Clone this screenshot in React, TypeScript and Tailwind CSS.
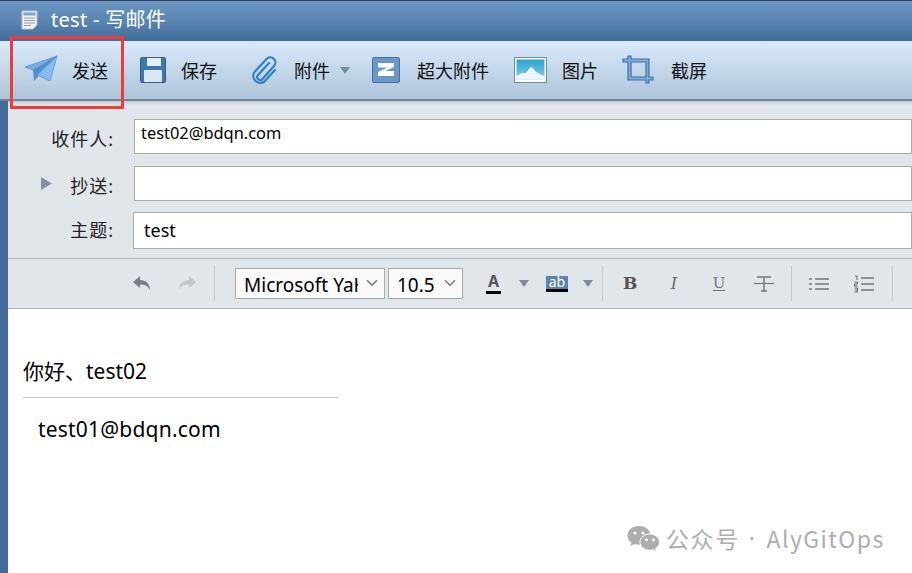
import { ChevronDown } from "lucide-react"

const cjk = "font-['Noto_Sans','Noto_Sans_CJK_SC',sans-serif]"

function SendIcon() {
  return (
    <svg width="36" height="30" viewBox="0 0 36 30" className="ml-[23px]">
      <ellipse cx="17" cy="28" rx="15" ry="0.8" fill="#c3d2e2" />
      <path d="M1 12 L33 1 L9 15 Z" fill="#79aee4" stroke="#5b93cd" strokeWidth="0.8" />
      <path d="M9 15 L33 1 L10 26 Z" fill="#4d8fd0" />
      <path d="M13 20 L33 1 L26 26 Z" fill="#86bbef" stroke="#5b93cd" strokeWidth="0.8" />
    </svg>
  )
}

function SaveIcon() {
  return (
    <svg width="28" height="28" viewBox="0 0 28 28" className="ml-[31px]">
      <path d="M1.5 3 a1.5 1.5 0 0 1 1.5-1.5 H25 a1.5 1.5 0 0 1 1.5 1.5 V25 a1.5 1.5 0 0 1 -1.5 1.5 H3 a1.5 1.5 0 0 1 -1.5-1.5 Z" fill="#3a78ad" stroke="#3d5d7d" />
      <rect x="8" y="2" width="14" height="8" fill="#e4eef6" />
      <rect x="5" y="14" width="18" height="12" rx="1" fill="#dbe8f3" />
    </svg>
  )
}

function ClipIcon() {
  return (
    <svg width="30" height="30" viewBox="0 0 30 30" fill="none" className="ml-[33px]">
      <ellipse cx="14" cy="28.5" rx="11" ry="0.8" fill="#c3d2e2" />
      <path d="M19 8 L8 20 a3 3 0 0 0 4.5 4 L24 11 a5 5 0 0 0 -7.5-7 L4.5 17 a7 7 0 0 0 10 9.5 L25 15" stroke="#2f7fc4" strokeWidth="2.2" strokeLinecap="round" />
    </svg>
  )
}

function ZIcon() {
  return (
    <svg width="28" height="26" viewBox="0 0 28 26" className="ml-[22px]">
      <rect x="0.5" y="0.5" width="27" height="25" rx="1.5" fill="#6a97c9" stroke="#49709b" />
      <path d="M6 6 H22 V10 L13 14 H22 V19 H6 V15 L15.5 10.5 H6 Z" fill="#ffffff" />
    </svg>
  )
}

function PictureIcon() {
  return (
    <svg width="33" height="26" viewBox="0 0 33 26" className="ml-[25px]">
      <defs>
        <linearGradient id="sky" x1="0" y1="0" x2="0" y2="1">
          <stop offset="0" stopColor="#2ba2cf" />
          <stop offset="1" stopColor="#86cfe6" />
        </linearGradient>
      </defs>
      <rect x="0.5" y="0.5" width="32" height="25" fill="#ffffff" stroke="#6d8aa8" />
      <rect x="2.5" y="2.5" width="28" height="20" fill="url(#sky)" />
      <path d="M2.5 22.5 V19 L8 16 L12 16 L15 12 L17 10 L19 11 L22 15 L26 17 L30.5 19 V22.5 Z" fill="#eef5f9" />
    </svg>
  )
}

function CropIcon() {
  return (
    <svg width="32" height="30" viewBox="0 0 32 30" fill="none" className="ml-[24px]">
      <path d="M1 4 H6 V1 H9 V4 H27 V22 H31 V25 H27 V28 H24 V25 H6 V7 H1 Z M9 7 V22 H24 V7 Z" fill="#7aaee6" stroke="#436f9f" strokeWidth="1.2" />
    </svg>
  )
}

function Caret({ className }: { className: string }) {
  return (
    <svg width="10" height="7" viewBox="0 0 10 7" className={className}>
      <path d="M0 0 H10 L5 7 Z" fill="#7d8b9b" />
    </svg>
  )
}

function Separator({ className }: { className: string }) {
  return <div className={`h-[35px] w-px bg-[#c3c8cd] ${className}`} />
}

function Select({ label, labelClass, className }: { label: string; labelClass: string; className: string }) {
  return (
    <div className={`flex h-[31px] items-center justify-between border border-[#a9a9a9] bg-[#fafafa] text-[19px] text-black ${className}`}>
      <span className={`ml-[8px] overflow-hidden whitespace-nowrap pt-[3px] ${labelClass}`}>{label}</span>
      <ChevronDown size={18} strokeWidth={2.2} className="mr-[3px] -translate-y-px shrink-0 text-[#7b7b7b]" />
    </div>
  )
}

export default function App() {
  return (
    <div className={`relative flex h-[573px] w-[912px] overflow-hidden bg-white ${cjk}`}>
      <div className="w-2 shrink-0 bg-[#436b99]" />
      <div className="flex min-w-0 flex-1 flex-col">
        {/* title */}
        <div className="-ml-2 flex h-[41px] items-center border-t border-[#2c4560] bg-gradient-to-b from-[#6c96c1] via-[#5b85b2] to-[#416b99] pb-[2px] pl-[21px] text-[20px] tracking-[0.3px] text-white">
          <svg width="17" height="20" viewBox="0 0 17 20">
            <path d="M1 1 H16 V15 L12 19 H1 Z" fill="#f1f1ee" stroke="#b9c2cb" />
            <rect x="2.5" y="2.5" width="12" height="3" fill="#7aa3d0" />
            <path d="M3 8 H14 M3 10.5 H14 M3 13 H14 M3 15.5 H10" stroke="#8f969e" strokeWidth="0.9" />
          </svg>
          <span className="ml-[13px]">test - 写邮件</span>
        </div>

        {/* main toolbar */}
        <div className="-ml-2 flex h-[60px] shrink-0 items-center border-b-2 border-[#6f8399] bg-gradient-to-b from-[#d9eafa] to-[#afc5db] pl-px text-[18px] text-[#111]">
          <SendIcon />
          <span className="ml-[12px] pt-[3px]">发送</span>
          <SaveIcon />
          <span className="ml-[14px] pt-[3px]">保存</span>
          <ClipIcon />
          <span className="ml-[14px] pt-[3px]">附件</span>
          <Caret className="ml-[10px]" />
          <ZIcon />
          <span className="ml-[17px] pt-[3px]">超大附件</span>
          <PictureIcon />
          <span className="ml-[15px] pt-[3px]">图片</span>
          <CropIcon />
          <span className="ml-[17px] pt-[3px]">截屏</span>
        </div>

        {/* address fields */}
        <div className="h-[158px] shrink-0 border-b border-[#b4b8bc] bg-[#e1e6ea]">
          <div className="h-1 bg-gradient-to-b from-[#c6cacf] to-[#e1e6ea]" />
          <div className="mt-[14px] flex h-[35px] items-center">
            <div className="w-[126px] pr-[20px] pt-[6px] text-right text-[18px] tracking-[1px] text-[#222]">收件人:</div>
            <div className="h-[35px] flex-1 border border-[#ababab] bg-white pl-[6px] text-[16.4px] leading-[26px] text-black">test02@bdqn.com</div>
          </div>
          <div className="mt-[12px] flex h-[35px] items-center">
            <div className="flex w-[126px] items-center justify-between pl-[33px] pr-[20px] pt-[6px] text-[18px] tracking-[1px] text-[#222]">
              <svg width="11" height="13" viewBox="0 0 11 13" className="-translate-y-[3px]">
                <path d="M0 0 L11 6.5 L0 13 Z" fill="#8093a9" />
              </svg>
              <span>抄送:</span>
            </div>
            <div className="h-[35px] flex-1 border border-[#ababab] bg-white" />
          </div>
          <div className="mt-[11px] flex h-[37px] items-center">
            <div className="w-[125px] pr-[19px] text-right text-[18px] tracking-[1px] text-[#222]">主题:</div>
            <div className="h-[37px] flex-1 border border-[#ababab] bg-white pl-[10px] text-[18px] leading-[34px] text-black">test</div>
          </div>
        </div>

        {/* format toolbar */}
        <div className="flex h-[50px] shrink-0 items-center border-b border-[#b4b8bc] bg-[#e1e6ea] text-[#6f6f6f]">
          <svg width="18" height="15" viewBox="0 0 18 15" className="ml-[125px]">
            <path d="M0 6 L7 0 V4 C13 4 17 8 17 14 C15 10 12 8.5 7 8.5 V12 Z" fill="#787f86" />
          </svg>
          <svg width="18" height="15" viewBox="0 0 18 15" className="ml-[27px]">
            <path d="M18 6 L11 0 V4 C5 4 1 8 1 14 C3 10 6 8.5 11 8.5 V12 Z" fill="#c5c9cd" />
          </svg>
          <Separator className="ml-[18px]" />
          <Select label="Microsoft YaHei" labelClass="w-[114px]" className="ml-[20px] w-[150px]" />
          <Select label="10.5" labelClass="w-[44px]" className="ml-[3px] w-[75px]" />
          <div className="ml-[23px] flex w-[15px] flex-col items-center font-bold leading-[15px] text-[#565656]">
            <span className="text-[16px]">A</span>
            <div className="mt-[2px] h-[3px] w-[15px] bg-black" />
          </div>
          <Caret className="ml-[18px]" />
          <div className="ml-[17px] flex w-[22px] flex-col">
            <div className="flex h-[13px] items-center justify-center bg-[#5d84ad] text-[14px] leading-none text-white">ab</div>
            <div className="h-[3px] bg-black" />
          </div>
          <Caret className="ml-[15px]" />
          <Separator className="ml-[9px]" />
          <div className="ml-[20px] w-[14px] text-center font-['DejaVu_Serif',serif] text-[17px] font-bold text-[#555]">B</div>
          <div className="ml-[30px] w-[14px] text-center font-['DejaVu_Serif',serif] text-[16px] italic text-[#666]">I</div>
          <div className="ml-[31px] w-[14px] text-center font-['DejaVu_Serif',serif] text-[15px] text-[#777] underline underline-offset-2">U</div>
          <svg width="20" height="16" viewBox="0 0 20 16" className="ml-[28px]">
            <path d="M3 1 H17 M10 1 V15 M7 15 H13" stroke="#777" strokeWidth="1.5" fill="none" />
            <path d="M0 7.5 H20" stroke="#777" strokeWidth="1.2" />
          </svg>
          <Separator className="ml-[17px]" />
          <svg width="20" height="14" viewBox="0 0 20 14" className="ml-[17px]">
            <path d="M0 2 H3 M0 7 H3 M0 12 H3 M6 2 H20 M6 7 H20 M6 12 H20" stroke="#777" strokeWidth="1.4" />
          </svg>
          <svg width="20" height="18" viewBox="0 0 20 18" className="ml-[25px]">
            <path d="M7 3 H20 M7 9 H20 M7 15 H20" stroke="#777" strokeWidth="1.4" />
            <path d="M1 1 H3 V5 M0.5 7 H3.5 V9 H0.5 V11 H3.5 M0.5 13 H3.5 V17 H0.5 M1 15 H3.5" stroke="#666" strokeWidth="1" fill="none" />
          </svg>
          <Separator className="ml-[18px]" />
        </div>

        {/* message body */}
        <div className="flex-1 bg-white pl-[15px] pt-[47px] text-black">
          <div className="text-[21px] leading-[30px]">你好、test02</div>
          <div className="mt-[11px] h-px w-[315px] bg-[#bfc3d3]" />
          <div className="mt-[17px] pl-[15px] text-[21px] leading-[28px] tracking-[0.2px]">test01@bdqn.com</div>
        </div>
      </div>

      {/* highlight round send button */}
      <div className="absolute left-[10px] top-[36px] h-[73px] w-[114px] border-[3px] border-[#f03b3b]" />

      {/* watermark */}
      <div className="absolute left-[627px] top-[521px] flex items-center font-['Noto_Sans_CJK_SC',sans-serif] text-[23px] tracking-[1.6px] text-[#adadad]">
        <svg width="33" height="27" viewBox="0 0 33 27">
          <path d="M12 1 C5.5 1 0.5 5 0.5 10.5 C0.5 13.5 2 16 4.5 17.7 L3.5 21 L7.5 19 C9 19.5 10.5 19.7 12 19.7 C18.5 19.7 23.5 15.5 23.5 10.5 C23.5 5 18.5 1 12 1 Z" fill="#adadad" />
          <circle cx="8" cy="8" r="1.6" fill="#fff" />
          <circle cx="16" cy="8" r="1.6" fill="#fff" />
          <path d="M23 9 C17.5 9 13 12.7 13 17.3 C13 21.7 17.5 25.3 23 25.3 C24.2 25.3 25.3 25.1 26.3 24.8 L29.5 26.5 L28.7 23.5 C31 22 32.5 19.8 32.5 17.3 C32.5 12.7 28.3 9 23 9 Z" fill="#adadad" stroke="#fff" strokeWidth="1" />
          <circle cx="19.5" cy="15" r="1.4" fill="#fff" />
          <circle cx="26.5" cy="15" r="1.4" fill="#fff" />
        </svg>
        <span className="ml-[6px]">公众号</span>
        <span className="ml-[9px] font-['Noto_Sans',sans-serif]">·</span>
        <span className="ml-[10px] tracking-[1.4px]">AlyGitOps</span>
      </div>
    </div>
  )
}
